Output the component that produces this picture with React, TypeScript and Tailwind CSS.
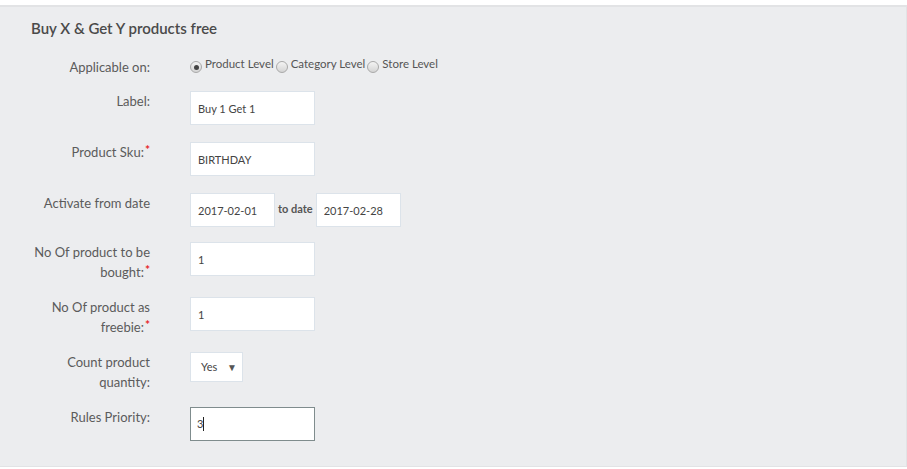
import React from "react";

const font = { fontFamily: "Lato, 'Open Sans', sans-serif" };

const Req = () => <span className="text-[#e8262a] text-[12px] font-bold align-top relative -top-[2px] ml-px">*</span>;

const Row = ({ label, mb, children }: { label: React.ReactNode; mb: string; children: React.ReactNode }) => (
  <div className={"flex items-start " + mb}>
    <div className="w-[150px] text-right text-[13px] leading-[20px] text-[#5b5b5b]">{label}</div>
    <div className="ml-[40px] flex items-center">{children}</div>
  </div>
);

const Field = ({ value, w = "w-[125px]" }: { value: string; w?: string }) => (
  <input
    readOnly
    value={value}
    className={w + " h-[34px] bg-white border border-[#dce3ea] px-[7px] text-[11px] text-[#444] outline-none"}
  />
);

const Radio = ({ checked, label }: { checked?: boolean; label: string }) => (
  <div className="flex items-start">
    <span className="mt-[4px] w-[12px] h-[12px] rounded-full border border-[#a9a9a9] bg-gradient-to-b from-[#f4f4f4] to-[#d4d4d4] flex items-center justify-center">
      {checked && <span className="w-[5px] h-[5px] rounded-full bg-[#444]" />}
    </span>
    <span className="ml-[3px] text-[11.5px] leading-[14px] text-[#555]">{label}</span>
  </div>
);

const App = () => {
  return (
    <div className="w-[907px] h-[469px] bg-white pt-[5px]" style={font}>
      <div className="h-[462px] bg-[#ecedef] border-t-2 border-b border-r border-[#e2e3e5]">
        <h1 className="pl-[31px] pt-[11px] text-[15px] font-semibold leading-[20px] text-[#4a4a4a]">
          Buy X &amp; Get Y products free
        </h1>
        <div className="mt-[19px]">
          <Row label="Applicable on:" mb="mb-[14px]">
            <div className="flex gap-[2px] h-[20px]">
              <Radio checked label="Product Level" />
              <Radio label="Category Level" />
              <Radio label="Store Level" />
            </div>
          </Row>
          <Row label="Label:" mb="mb-[17px]">
            <Field value="Buy 1 Get 1" />
          </Row>
          <Row label={<>Product Sku:<Req /></>} mb="mb-[17px]">
            <Field value="BIRTHDAY" />
          </Row>
          <Row label="Activate from date" mb="mb-[15px]">
            <Field value="2017-02-01" w="w-[85px]" />
            <span className="mx-[3px] text-[11px] font-bold text-[#555] -mt-[2px]">to date</span>
            <Field value="2017-02-28" w="w-[85px]" />
          </Row>
          <Row label={<>No Of product to be<br />bought:<Req /></>} mb="mb-[15px]">
            <Field value="1" />
          </Row>
          <Row label={<>No Of product as<br />freebie:<Req /></>} mb="mb-[15px]">
            <Field value="1" />
          </Row>
          <Row label={<>Count product<br />quantity:</>} mb="mb-[15px]">
            <div className="w-[53px] h-[30px] bg-white border border-[#dce3ea] flex items-center justify-between pl-[10px] pr-[5px] text-[11px] text-[#444]">
              <span>Yes</span>
              <span className="text-[10px] text-[#555]">▼</span>
            </div>
          </Row>
          <Row label="Rules Priority:" mb="mb-0">
            <div className="w-[125px] h-[34px] bg-white border border-[#7f8c8d] px-[6px] flex items-center text-[11px] text-[#444]">
              <span>3</span>
              <span className="w-px h-[14px] bg-[#222]" />
            </div>
          </Row>
        </div>
      </div>
    </div>
  );
};

export default App;
